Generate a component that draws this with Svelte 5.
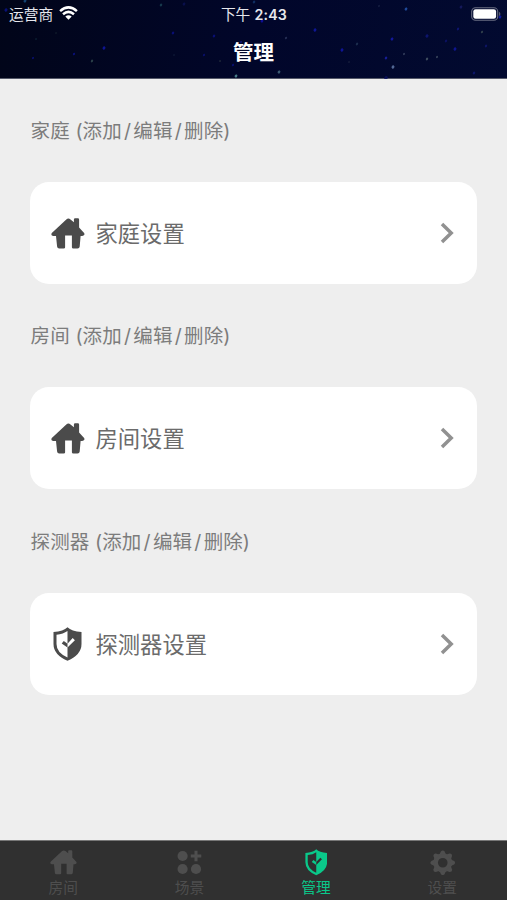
<script>
  const sections = [
    { title: '家庭', label: '家庭设置', icon: 'home' },
    { title: '房间', label: '房间设置', icon: 'home' },
    { title: '探测器', label: '探测器设置', icon: 'shield' }
  ];
  const tabs = [
    { label: '房间', icon: 'home' },
    { label: '场景', icon: 'scene' },
    { label: '管理', icon: 'shield', active: true },
    { label: '设置', icon: 'gear' }
  ];
  // x, y, radius, colour
  const stars = [
    [25, 1, 1.6, '#164f82'], [6, 10, 1.8, '#0b1486'], [161, 5, 1.5, '#1b4354'],
    [104, 48, 1.7, '#1017a5'], [74, 54, 1.3, '#0c1388'], [33, 58, 1.2, '#0b1278'],
    [92, 61, 1.4, '#334a50'], [36, 39, 1, '#11283a'], [56, 33, 1, '#14202e'],
    [254, 2, 1.5, '#12356c'], [184, 4, 1.6, '#0b1252'], [262, 21, 1.6, '#1010a5'],
    [173, 33, 1.5, '#0c1183'], [214, 36, 1.5, '#0c1283'], [315, 30, 1.7, '#1119a5'],
    [286, 38, 1.3, '#2b355b'], [204, 55, 1.3, '#0b1276'], [220, 61, 1, '#2a3541'],
    [233, 65, 1.3, '#0b137b'], [236, 76, 1.6, '#558f98'], [279, 72, 1.6, '#456980'],
    [241, 42, 1.2, '#0b1483'], [174, 55, 1, '#121d3a'],
    [406, 9, 1.6, '#2455ac'], [379, 6, 1.2, '#182043'], [461, 7, 1.6, '#171b62'],
    [392, 39, 1.6, '#151bad'], [342, 50, 1.7, '#1016a6'], [357, 44, 1.4, '#213454'],
    [386, 58, 1.5, '#1b22a9'], [393, 67, 1.7, '#6078a6'], [404, 54, 1.2, '#384360'],
    [427, 59, 1.4, '#4b5b68'], [437, 57, 1.2, '#404c60'], [455, 49, 1.7, '#1018a0'],
    [446, 41, 1.4, '#0d136b'], [427, 36, 1.8, '#0f1778'], [458, 29, 1.4, '#10177b'],
    [482, 32, 1.3, '#3a4a51'], [500, 17, 1.6, '#111bb0'], [474, 73, 1.5, '#0e1773'],
    [486, 46, 1.4, '#10186f'], [349, 62, 1, '#1c2541'], [386, 78, 2, '#0b1260']
  ];
</script>

{#snippet glyph(name)}
  {#if name === 'home'}
    <svg class="home" viewBox="0 0 34 31">
      <path d="M15.3 1.4Q17.4-.3 19.5 1.4L22.9 4.2V1.5Q22.9.3 24.1.3H26.9Q28.1.3 28.1 1.5V9.6L33.1 14.9Q34.5 17.6 31.2 17.9H29.6L28.7 28.6Q28.5 30.6 26.5 30.6H22.3Q20.9 30.6 20.9 29.2V17.4H14.1V29.2Q14.1 30.6 12.7 30.6H8.2Q6.3 30.6 6.1 28.6L5 17.9H2.3Q-.6 17.6.8 14.9Z" />
    </svg>
  {:else if name === 'shield'}
    <svg class="shield" viewBox="0 0 29 34">
      <path fill-rule="evenodd" d="M14.5.3Q18.5 4.3 28.5 5V17Q28.5 27.8 14.5 33.7Q.5 27.8.5 17V5Q10.5 4.3 14.5.3ZM14.5 4Q10.4 7 3.5 7.8V17Q3.5 25.7 14.5 30.4V20.6L8.7 16.6L10.8 14.1L14.5 16.7L19.7 11.1L21.9 13.2L14.5 20.6Z" />
    </svg>
  {:else if name === 'scene'}
    <svg class="scene" viewBox="0 0 25 25">
      <circle cx="5.6" cy="6" r="5.1" />
      <circle cx="5.6" cy="19" r="5.1" />
      <circle cx="19" cy="19" r="5.1" />
      <path d="M17.5.8H20.5V4.5H24.3V7.4H20.5V11.2H17.5V7.4H13.8V4.5H17.5Z" />
    </svg>
  {:else}
    <svg class="gear" viewBox="0 0 26 26">
      <circle cx="13" cy="13" r="7.3" fill="none" stroke="currentColor" stroke-width="4.8" />
      {#each [0, 45, 90, 135, 180, 225, 270, 315] as a}
        <path d="M9.6 4.8L11.2 1.4Q13-.6 14.8 1.4L16.4 4.8Z" transform="rotate({a} 13 13)" />
      {/each}
    </svg>
  {/if}
{/snippet}

<div class="app">
  <header>
    <svg class="sky" viewBox="0 0 507 79">
      {#each stars as [x, y, r, c]}
        <ellipse cx={x} cy={y} rx={r * 0.8} ry={r} fill={c} opacity="0.85" transform="rotate(30 {x} {y})" />
      {/each}
    </svg>
    <div class="status">
      <div class="carrier">
        <span>运营商</span>
        <svg class="wifi" viewBox="0 0 19 14">
          <path d="M1.1 5.1Q9.5-2.3 17.9 5.1M4 8.2Q9.5 3.5 15 8.2" fill="none" stroke="#fff" stroke-width="2.5" />
          <path d="M6.3 10.6Q9.5 8 12.7 10.6L9.5 13.8Z" fill="#fff" />
        </svg>
      </div>
      <div class="time">下午 <b>2:43</b></div>
      <svg class="battery" viewBox="0 0 30 14">
        <rect x=".7" y=".7" width="26" height="12.6" rx="3.8" fill="none" stroke="#696d83" stroke-width="1.1" />
        <rect x="2.3" y="2.3" width="22.8" height="9.4" rx="2.3" fill="#fff" />
        <path d="M28.2 4.8Q30.5 7 28.2 9.2Z" fill="#696d83" />
      </svg>
    </div>
    <h1>管理</h1>
  </header>

  <main>
    {#each sections as s}
      <section>
        <h2>{s.title} (添加<i>/</i>编辑<i>/</i>删除)</h2>
        <div class="card">
          <span class="icon">{@render glyph(s.icon)}</span>
          <span class="label">{s.label}</span>
          <svg class="chevron" viewBox="0 0 14 22">
            <path d="M2 2L11.2 11L2 20" fill="none" stroke="#919191" stroke-width="3.5" />
          </svg>
        </div>
      </section>
    {/each}
  </main>

  <nav>
    {#each tabs as t}
      <div class="tab" class:active={t.active}>
        <span class="icon">{@render glyph(t.icon)}</span>
        <span>{t.label}</span>
      </div>
    {/each}
  </nav>
</div>

<style>
  .app {
    width: 507px;
    height: 900px;
    display: flex;
    flex-direction: column;
    overflow: hidden;
    background: #eee;
    font-family: Inter, "Noto Sans CJK SC", sans-serif;
  }
  svg { display: block; fill: currentColor; }
  header {
    position: relative;
    height: 79px;
    box-sizing: border-box;
    flex: none;
    color: #fff;
    background: linear-gradient(100deg, #010519, #01062a 50%, #020a30);
    border-bottom: 1px solid #555969;
  }
  .sky { position: absolute; top: 0; left: 0; width: 507px; height: 79px; }
  .status {
    position: relative;
    display: grid;
    grid-template-columns: 1fr auto 1fr;
    align-items: center;
    height: 27px;
    padding: 0 6px 0 9px;
    font-size: 14.7px;
    line-height: 24px;
    color: #e6e7ed;
  }
  .carrier { display: flex; align-items: center; gap: 6px; }
  .carrier span, .time { padding-top: 2px; }
  .wifi { width: 19px; height: 14px; margin-top: -1px; }
  .time { white-space: pre; padding-right: 2px; }
  .time b { font-weight: 600; font-size: 14.2px; letter-spacing: .2px; }
  .battery { width: 30px; height: 14px; justify-self: end; }
  h1 {
    position: relative;
    margin: 0;
    padding-top: 1px;
    font-size: 20.5px;
    line-height: 50px;
    font-weight: 700;
    text-align: center;
  }
  main { flex: 1; padding: 0 30px; }
  section { height: 205.3px; }
  h2 {
    box-sizing: border-box;
    margin: 0;
    height: 103px;
    padding: 38px 0 0 .6px;
    font-size: 19.5px;
    line-height: 29px;
    font-weight: 400;
    letter-spacing: .1px;
    color: #7c7c7c;
    white-space: nowrap;
  }
  h2 i { font-style: normal; padding: 0 2.2px; }
  .card {
    display: flex;
    align-items: center;
    box-sizing: border-box;
    width: 447px;
    height: 102px;
    padding: 0 23px 0 20px;
    border-radius: 19px;
    background: #fff;
    color: #4b4b4b;
  }
  .icon { display: flex; justify-content: center; align-items: center; }
  .card .icon { width: 35px; }
  .card .home { width: 34px; height: 31px; }
  .card .shield { width: 29px; height: 34px; }
  .label { margin-left: 10.5px; padding-top: 2px; font-size: 22.3px; line-height: 32px; color: #6b6b6b; }
  .chevron { width: 14px; height: 22px; margin-left: auto; }
  nav {
    display: flex;
    flex: none;
    height: 60px;
    box-sizing: border-box;
    padding-right: 1.5px;
    border-top: 1px solid #777;
    background: #303030;
  }
  .tab {
    flex: 1;
    display: flex;
    flex-direction: column;
    align-items: center;
    padding-top: 8px;
    font-size: 14.7px;
    line-height: 20px;
    color: #4e4e4e;
  }
  .tab .icon { height: 27px; margin-bottom: 2.4px; }
  .tab.active { color: #0ac88a; }
  .tab .home { width: 27px; height: 24.6px; }
  .tab .shield { width: 22.5px; height: 26.5px; }
  .tab .scene { width: 25px; height: 25px; }
  .tab .gear { width: 25.5px; height: 25.5px; }
</style>
